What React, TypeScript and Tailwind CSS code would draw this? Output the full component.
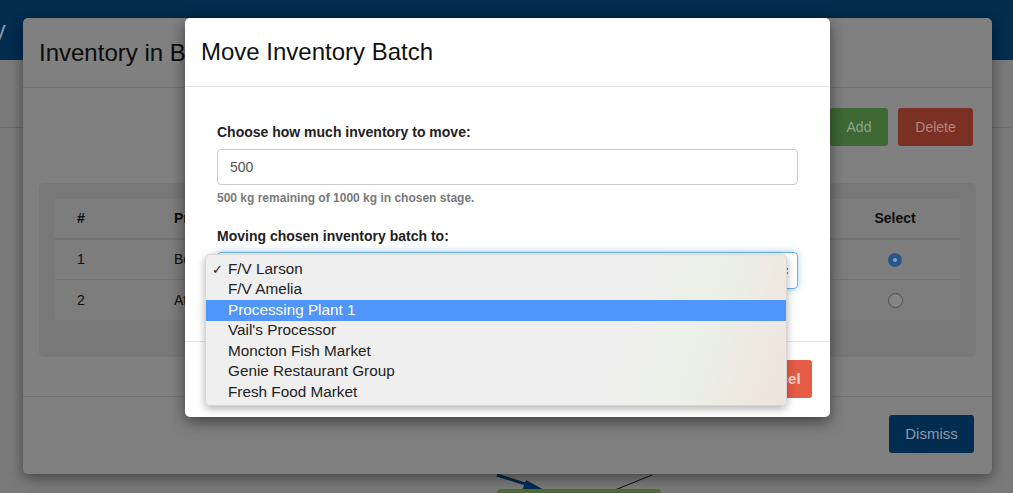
const destinations = [
  'F/V Larson',
  'F/V Amelia',
  'Processing Plant 1',
  "Vail's Processor",
  'Moncton Fish Market',
  'Genie Restaurant Group',
  'Fresh Food Market',
]

function PageBehind() {
  return (
    <div className="flex h-full flex-col">
      <div className="flex h-[60px] items-center bg-[#032c4f]">
        <span className="-ml-[93px] text-[24px] text-[#8496a8]">Inventory</span>
      </div>
      <div className="h-[67px]" />
      <div className="relative flex-1 border-t border-[#6d6d6d]">
        {/* flow graph peeking out at the bottom */}
        <svg className="absolute left-[480px] top-[333px]" width="200" height="32" viewBox="0 0 200 32">
          <path d="M17 14 L55 26" stroke="#032c4f" strokeWidth="3" />
          <path d="M46 19 L66 30 L42 30 Z" fill="#032c4f" />
          <path d="M135 29 L172 14" stroke="#111" strokeWidth="1" />
          <rect x="17" y="28" width="164" height="10" rx="4" fill="#4f6b35" />
        </svg>
      </div>
    </div>
  )
}

function InventoryModal() {
  return (
    <div className="absolute left-[23px] top-[18px] flex h-[456px] w-[969px] flex-col rounded-[5px] bg-[#808080] shadow-[0_4px_14px_rgba(0,0,0,0.45)]">
      <div className="flex h-[70px] items-center border-b border-[#737373] px-4">
        <h2 className="text-[24px] text-[#0b0b0b]">Inventory in Batch</h2>
      </div>
      <div className="flex flex-col px-4">
        <div className="flex justify-end gap-[10px] pt-[20px] pr-[3px]">
          <button className="h-[38px] w-[58px] rounded-[3px] bg-[#3e6834] text-[14px] text-[#8fa58a]">
            Add
          </button>
          <button className="h-[38px] w-[75px] rounded-[3px] bg-[#7b3024] text-[14px] text-[#b1867f]">
            Delete
          </button>
        </div>
        <div className="mt-[37px] h-[174px] rounded-[5px] bg-[#787878] p-4">
          <div className="rounded-[3px] bg-[#7d7d7d] text-[14px] text-[#0d0d0d]">
            <div className="flex h-[41px] items-center border-b-2 border-[#727272] font-bold">
              <span className="w-[119px] pl-[22px]">#</span>
              <span className="flex-1">Product</span>
              <span className="w-[132px] pl-[2px] text-center">Select</span>
            </div>
            <div className="flex h-[40px] items-center border-b border-[#747474]">
              <span className="w-[119px] pl-[22px]">1</span>
              <span className="flex-1">Boat</span>
              <span className="flex w-[132px] justify-center pl-[2px]">
                <span className="flex h-[14px] w-[14px] items-center justify-center rounded-full bg-[#27568c]">
                  <span className="h-[4px] w-[4px] rounded-full bg-[#8aa3bf]" />
                </span>
              </span>
            </div>
            <div className="flex h-[40px] items-center">
              <span className="w-[119px] pl-[22px]">2</span>
              <span className="flex-1">Atlantic</span>
              <span className="flex w-[132px] justify-center pl-[2px]">
                <span className="h-[15px] w-[15px] rounded-full border border-[#505050] bg-[#858585]" />
              </span>
            </div>
          </div>
        </div>
      </div>
      <div className="mt-[39px] flex flex-1 items-start justify-end border-t border-[#737373] px-4 pt-[18px] pr-[18px]">
        <button className="h-[38px] w-[85px] rounded-[3px] bg-[#032d50] text-[15px] text-[#8d9bab]">
          Dismiss
        </button>
      </div>
    </div>
  )
}

function MoveModal() {
  return (
    <div className="absolute left-[185px] top-[18px] flex h-[399px] w-[645px] flex-col rounded-[5px] bg-white shadow-[0_5px_15px_rgba(0,0,0,0.5)]">
      <div className="flex h-[69px] items-center border-b border-[#e5e5e5] px-4">
        <h3 className="text-[24px] text-[#111]">Move Inventory Batch</h3>
      </div>
      <div className="flex h-[254px] flex-col px-[32px] pt-[35px]">
        <label className="text-[14px] font-bold leading-[20px] text-[#222]">
          Choose how much inventory to move:
        </label>
        <div className="mt-[7px] flex h-[36px] items-center rounded-[4px] border border-[#cccccc] px-3 text-[14px] text-[#555]">
          500
        </div>
        <p className="mt-[5px] text-[12px] font-bold leading-[16px] text-[#7a7a7a]">
          500 kg remaining of 1000 kg in chosen stage.
        </p>
        <label className="mt-[20px] text-[14px] font-bold leading-[20px] text-[#222]">
          Moving chosen inventory batch to:
        </label>
        <div className="mt-[6px] flex h-[37px] items-center justify-end rounded-[4px] border border-[#66afe9] px-3 shadow-[0_0_7px_rgba(102,175,233,0.6)]">
          <svg width="8" height="14" viewBox="0 0 8 14" className="-mr-[4px]">
            <path d="M4 1 L7.5 5.5 L0.5 5.5 Z" fill="#333" />
            <path d="M4 13 L7.5 8.5 L0.5 8.5 Z" fill="#333" />
          </svg>
        </div>
      </div>
      <div className="flex flex-1 items-start justify-end gap-2 border-t border-[#e5e5e5] pt-[18px] pr-[18px]">
        <button className="h-[38px] w-[72px] rounded-[3px] bg-[#4d8a3d] text-[14px] text-white">
          Move
        </button>
        <button className="h-[38px] w-[72px] rounded-[3px] bg-[#e55b44] text-[15px] font-bold text-[#f6d2cb]">
          Cancel
        </button>
      </div>
    </div>
  )
}

function SelectMenu() {
  return (
    <div className="absolute left-[205px] top-[254px] w-[582px] rounded-[5px] border border-[#d6d6d6] bg-[linear-gradient(110deg,#efefef_70%,#ecefe6_85%,#f0e2dc_100%)] pt-[4px] pb-[2px] shadow-[0_3px_8px_rgba(0,0,0,0.3)]">
      {destinations.map((d, i) => (
        <div
          key={d}
          className={
            'flex h-[20.5px] items-center text-[15.3px] ' +
            (i === 2 ? 'bg-[#4f95fb] text-white' : 'text-[#222]')
          }
        >
          <span className="w-[22px] pl-[6px] text-[13px]">{i === 0 ? '✓' : ''}</span>
          {d}
        </div>
      ))}
    </div>
  )
}

export default function App() {
  return (
    <div
      className="relative h-[493px] w-[1013px] overflow-hidden bg-[#7a7a7a]"
      style={{ fontFamily: '"Liberation Sans", Arial, sans-serif' }}
    >
      <PageBehind />
      <InventoryModal />
      <MoveModal />
      <SelectMenu />
    </div>
  )
}
